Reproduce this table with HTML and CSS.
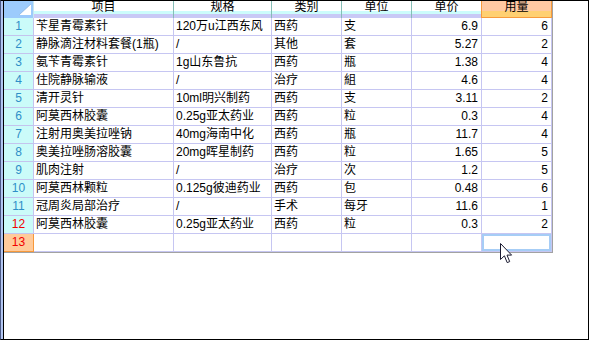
FILE: index.html
```html
<!DOCTYPE html>
<html lang="zh-CN">
<head>
<meta charset="utf-8">
<title>用药明细</title>
<link rel="stylesheet" href="styles.css">
</head>
<body>
<div class="window">
  <div class="gutter"></div>
  <div class="sheet">
    <div class="grid">
      <div class="corner"><svg class="corner-tri" width="12" height="11" viewBox="0 0 12 11"><polygon points="0,11 12,11 12,0" fill="#fff"/><line x1="0" y1="11" x2="12" y2="0" stroke="#7aa8d8" stroke-width="0.6"/></svg></div>
      <div class="hd"><span class="hd-t">项目</span></div>
      <div class="hd"><span class="hd-t">规格</span></div>
      <div class="hd"><span class="hd-t">类别</span></div>
      <div class="hd"><span class="hd-t">单位</span></div>
      <div class="hd hd-before"><span class="hd-t">单价</span></div>
      <div class="hd hd-active"><span class="hd-t">用量</span></div>

      <div class="rn">1</div><div class="c">苄星青霉素针</div><div class="c">120万u江西东风</div><div class="c">西药</div><div class="c">支</div><div class="c num">6.9</div><div class="c num">6</div>
      <div class="rn">2</div><div class="c">静脉滴注材料套餐(1瓶)</div><div class="c">/</div><div class="c">其他</div><div class="c">套</div><div class="c num">5.27</div><div class="c num">2</div>
      <div class="rn">3</div><div class="c">氨苄青霉素针</div><div class="c">1g山东鲁抗</div><div class="c">西药</div><div class="c">瓶</div><div class="c num">1.38</div><div class="c num">4</div>
      <div class="rn">4</div><div class="c">住院静脉输液</div><div class="c">/</div><div class="c">治疗</div><div class="c">組</div><div class="c num">4.6</div><div class="c num">4</div>
      <div class="rn">5</div><div class="c">清开灵针</div><div class="c">10ml明兴制药</div><div class="c">西药</div><div class="c">支</div><div class="c num">3.11</div><div class="c num">2</div>
      <div class="rn">6</div><div class="c">阿莫西林胶囊</div><div class="c">0.25g亚太药业</div><div class="c">西药</div><div class="c">粒</div><div class="c num">0.3</div><div class="c num">4</div>
      <div class="rn">7</div><div class="c">注射用奥美拉唑钠</div><div class="c">40mg海南中化</div><div class="c">西药</div><div class="c">瓶</div><div class="c num">11.7</div><div class="c num">4</div>
      <div class="rn">8</div><div class="c">奥美拉唑肠溶胶囊</div><div class="c">20mg晖星制药</div><div class="c">西药</div><div class="c">粒</div><div class="c num">1.65</div><div class="c num">5</div>
      <div class="rn">9</div><div class="c">肌肉注射</div><div class="c">/</div><div class="c">治疗</div><div class="c">次</div><div class="c num">1.2</div><div class="c num">5</div>
      <div class="rn">10</div><div class="c">阿莫西林颗粒</div><div class="c">0.125g彼迪药业</div><div class="c">西药</div><div class="c">包</div><div class="c num">0.48</div><div class="c num">6</div>
      <div class="rn">11</div><div class="c">冠周炎局部治疗</div><div class="c">/</div><div class="c">手术</div><div class="c">每牙</div><div class="c num">11.6</div><div class="c num">1</div>
      <div class="rn rn-red">12</div><div class="c">阿莫西林胶囊</div><div class="c">0.25g亚太药业</div><div class="c">西药</div><div class="c">粒</div><div class="c num">0.3</div><div class="c num">2</div>
      <div class="rn rn-red rn-active">13</div><div class="c"></div><div class="c"></div><div class="c"></div><div class="c"></div><div class="c"></div><div class="c sel"></div>
    </div>
  </div>
  <svg class="cursor" width="13" height="21" viewBox="0 0 13 21"><path d="M0.5 0.5V16.5L4.4 12.8L7.2 19.6L9.7 18.6L7 12.1H11.6Z" fill="#fff" stroke="#1a1a30" stroke-width="1" stroke-linejoin="miter"/></svg>
</div>
</body>
</html>
```

FILE: styles.css
```css
html, body {
  margin: 0;
  padding: 0;
  background: #fff;
}

.window {
  position: relative;
  box-sizing: border-box;
  width: 589px;
  height: 340px;
  border: 1px solid #000;
  border-left-color: #4c5a86;
  display: flex;
  background: #fff;
  font-family: "Liberation Sans", "Noto Sans CJK SC", sans-serif;
  font-size: 12px;
  color: #000;
}

.gutter {
  width: 2px;
  flex: 0 0 2px;
  background: #b2c6f2;
  border-right: 1px solid #000;
}

.sheet {
  flex: 1;
}

.grid {
  display: grid;
  grid-template-columns: 30px 140px 98px 70px 70px 70px 70px;
  grid-template-rows: 17px repeat(13, 18px);
  width: max-content;
  border-right: 1px solid #a2a2a2;
  border-bottom: 1px solid #a2a2a2;
}

.grid > div {
  box-sizing: border-box;
  white-space: nowrap;
  overflow: hidden;
}

.corner {
  background: #9ccbfc;
  border-right: 1px solid #c8e6f0;
  position: relative;
}

.corner-tri {
  position: absolute;
  left: 15px;
  top: 3px;
}

.grid > .hd {
  background: linear-gradient(to bottom, #fff 0, #fff 10px, #ccfcfc 10px, #ccfcfc 13px, #c9c9f6 13px, #c9c9f6 17px);
  border-right: 1px solid #86bdb6;
  text-align: center;
  overflow: visible;
  display: flex;
  justify-content: center;
  align-items: flex-start;
}

.hd-t {
  display: block;
  line-height: 13px;
}

.grid > .hd-before {
  border-right-color: #f79a3c;
}

.grid > .hd-active {
  background: linear-gradient(to bottom, #ffc9a2 0, #ffc9a2 10px, #ffd072 10px, #ffd072 16px, #f79a3c 16px, #f79a3c 17px);
  border-right-color: #f79a3c;
}

.rn {
  background: #cbfbf9;
  border-right: 1px solid #c4c4ee;
  border-bottom: 1px solid #c4c4ee;
  text-align: center;
  color: #2f8fc8;
  line-height: 17px;
}

.rn-red {
  color: #f20000;
}

.rn-active {
  background: #ffcb9b;
  border-right-color: #f7983a;
  border-bottom-color: #f7983a;
}

.c {
  border-right: 1px solid #c6c6f2;
  border-bottom: 1px solid #c6c6f2;
  padding-left: 2px;
  line-height: 17px;
  background: #fff;
}

.num {
  text-align: right;
  padding-left: 0;
  padding-right: 3px;
}

.sel {
  box-shadow: inset 0 0 0 2px #a6cdf6;
}

.cursor {
  position: absolute;
  left: 499px;
  top: 242px;
}
```
